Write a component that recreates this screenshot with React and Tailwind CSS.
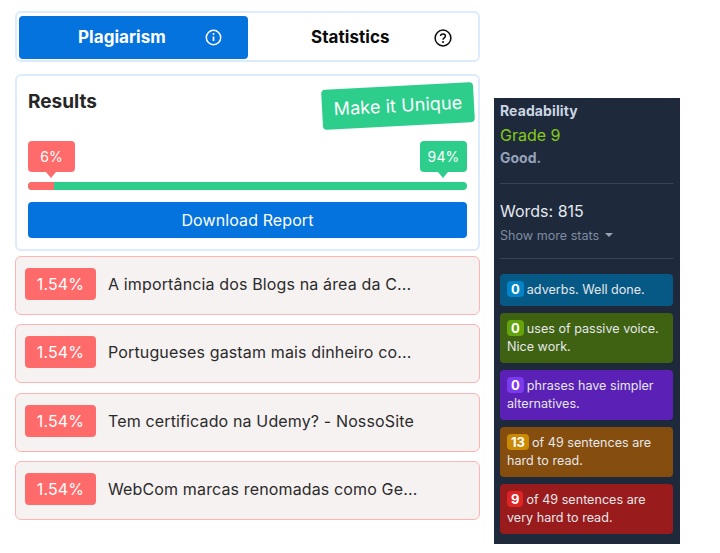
import React from 'react';

const sources = [
  'A importância dos Blogs na área da C...',
  'Portugueses gastam mais dinheiro co...',
  'Tem certificado na Udemy? - NossoSite',
  'WebCom marcas renomadas como Ge...',
];

const hints = [
  { badge: '0', text: 'adverbs. Well done.', box: 'bg-[#075985]', chip: 'bg-[#0284c7]' },
  { badge: '0', text: 'uses of passive voice. Nice work.', box: 'bg-[#3f6212]', chip: 'bg-[#65a30d]' },
  { badge: '0', text: 'phrases have simpler alternatives.', box: 'bg-[#5b21b6]', chip: 'bg-[#7c3aed]' },
  { badge: '13', text: 'of 49 sentences are hard to read.', box: 'bg-[#854d0e]', chip: 'bg-[#ca8a04]' },
  { badge: '9', text: 'of 49 sentences are very hard to read.', box: 'bg-[#991b1b]', chip: 'bg-[#dc2626]' },
];

const InfoIcon = () => (
  <svg width="17" height="17" viewBox="0 0 17 17" fill="none" stroke="currentColor">
    <circle cx="8.5" cy="8.5" r="7.2" strokeWidth="1.5" />
    <path d="M8.5 7.5v4.5" strokeWidth="1.7" />
    <circle cx="8.5" cy="5" r="1" fill="currentColor" stroke="none" />
  </svg>
);

const HelpIcon = () => (
  <svg width="18" height="18" viewBox="0 0 18 18" fill="none" stroke="currentColor">
    <circle cx="9" cy="9" r="7.9" strokeWidth="1.5" />
    <path d="M6.6 7.1c0-1.4 1.1-2.2 2.4-2.2s2.4.8 2.4 2.1c0 1.9-2.4 1.9-2.4 3.7" strokeWidth="1.5" />
    <circle cx="9" cy="13" r="1" fill="currentColor" stroke="none" />
  </svg>
);

const Bubble = ({ color, arrow, children }) => (
  <div className={`relative w-[47px] h-[31px] rounded flex items-center justify-center text-sm tracking-[0.1px] text-white ${color}`}>
    {children}
    <span className={`absolute left-[18px] top-full w-0 h-0 border-x-[5px] border-x-transparent border-t-[6px] ${arrow}`} />
  </div>
);

const App = () => {
  return (
    <div className="w-[720px] h-[553px] overflow-hidden bg-white flex items-start font-['Inter',sans-serif]">
      <div className="ml-[15px] mt-[11px] w-[465px] shrink-0">
        <div className="h-[51px] border-2 border-[#dcebfd] rounded-md pl-[2px] pt-[3px] flex">
          <div className="w-[229px] h-[43px] bg-[#0473de] rounded text-white flex items-center font-bold text-[17px] tracking-[0.05px]">
            <span className="ml-[59px]">Plagiarism</span>
            <span className="ml-[39px]"><InfoIcon /></span>
          </div>
          <div className="h-[43px] flex items-center font-bold text-[17px] tracking-[0.05px] text-[#0b0b0b]">
            <span className="ml-[63px]">Statistics</span>
            <span className="ml-[44px]"><HelpIcon /></span>
          </div>
        </div>

        <div className="relative mt-[12px] h-[177px] border-2 border-[#dcebfd] rounded-md px-[11px]">
          <h2 className="mt-[14px] text-[19px] leading-[24px] font-bold text-[#262626]">Results</h2>
          <div className="absolute left-[305px] top-[10px] w-[152px] h-[40px] bg-[#2dce8c] rounded -rotate-3 flex items-center justify-center text-lg tracking-[0.1px] text-white">
            Make it Unique
          </div>
          <div className="mt-[27px] flex justify-between">
            <Bubble color="bg-[#ff6b6b]" arrow="border-t-[#ff6b6b]">6%</Bubble>
            <Bubble color="bg-[#2dce8c]" arrow="border-t-[#2dce8c]">94%</Bubble>
          </div>
          <div className="mt-[10px] h-[8px] rounded-full overflow-hidden flex bg-[#2dce8c]">
            <div className="w-[26px] bg-[#ff6b6b]" />
          </div>
          <button className="mt-[12px] block w-full h-[36px] bg-[#0473de] rounded-sm text-white text-base tracking-[0.1px]">
            Download Report
          </button>
        </div>

        <div className="mt-[5px] flex flex-col gap-[9.4px]">
          {sources.map((title) => (
            <div key={title} className="h-[59px] border border-[#ffb3b3] rounded-md bg-[#f6f2f2] pl-[9px] pt-[11px] flex items-start">
              <span className="w-[71px] h-[32px] bg-[#ff6b6b] rounded flex items-center justify-center text-white text-base tracking-[0.15px]">1.54%</span>
              <span className="ml-[12px] h-[32px] flex items-center text-base tracking-[0.14px] text-[#2b2b2b]">{title}</span>
            </div>
          ))}
        </div>
      </div>

      <div className="ml-[14px] mt-[98px] w-[186px] h-[446px] shrink-0 bg-[#1e293b] px-[6px] pt-[4px] text-[12.6px]">
        <div className="text-sm leading-[18px] font-bold tracking-[0.1px] text-[#cbd5e1]">Readability</div>
        <div className="mt-[3px] text-base leading-[24px] text-[#84cc16]">Grade 9</div>
        <div className="mt-[2px] text-sm leading-[18px] font-bold text-[#94a3b8]">Good.</div>
        <div className="mt-[16px] mr-[1px] border-t border-[#374357]" />
        <div className="mt-[16px] text-base leading-[22px] text-[#e2e8f0]">Words: 815</div>
        <div className="mt-[5px] leading-[18px] text-[#7f8ca1] flex items-center">
          Show more stats
          <span className="ml-[6px] mb-[2px] w-0 h-0 border-x-[4px] border-x-transparent border-t-[4px] border-t-[#94a3b8]" />
        </div>
        <div className="mt-[13px] mr-[1px] border-t border-[#374357]" />
        <div className="mt-[15px] mr-[1px] flex flex-col gap-[7px]">
          {hints.map((hint) => (
            <div key={hint.text} className={`rounded px-[7px] py-[7px] leading-[18px] text-[#e5e7eb] ${hint.box}`}>
              <span className={`inline-block rounded-sm px-[4px] mr-[3px] leading-[16px] text-[13px] font-bold text-white ${hint.chip}`}>{hint.badge}</span>
              {hint.text}
            </div>
          ))}
        </div>
      </div>
    </div>
  );
};

export default App;
